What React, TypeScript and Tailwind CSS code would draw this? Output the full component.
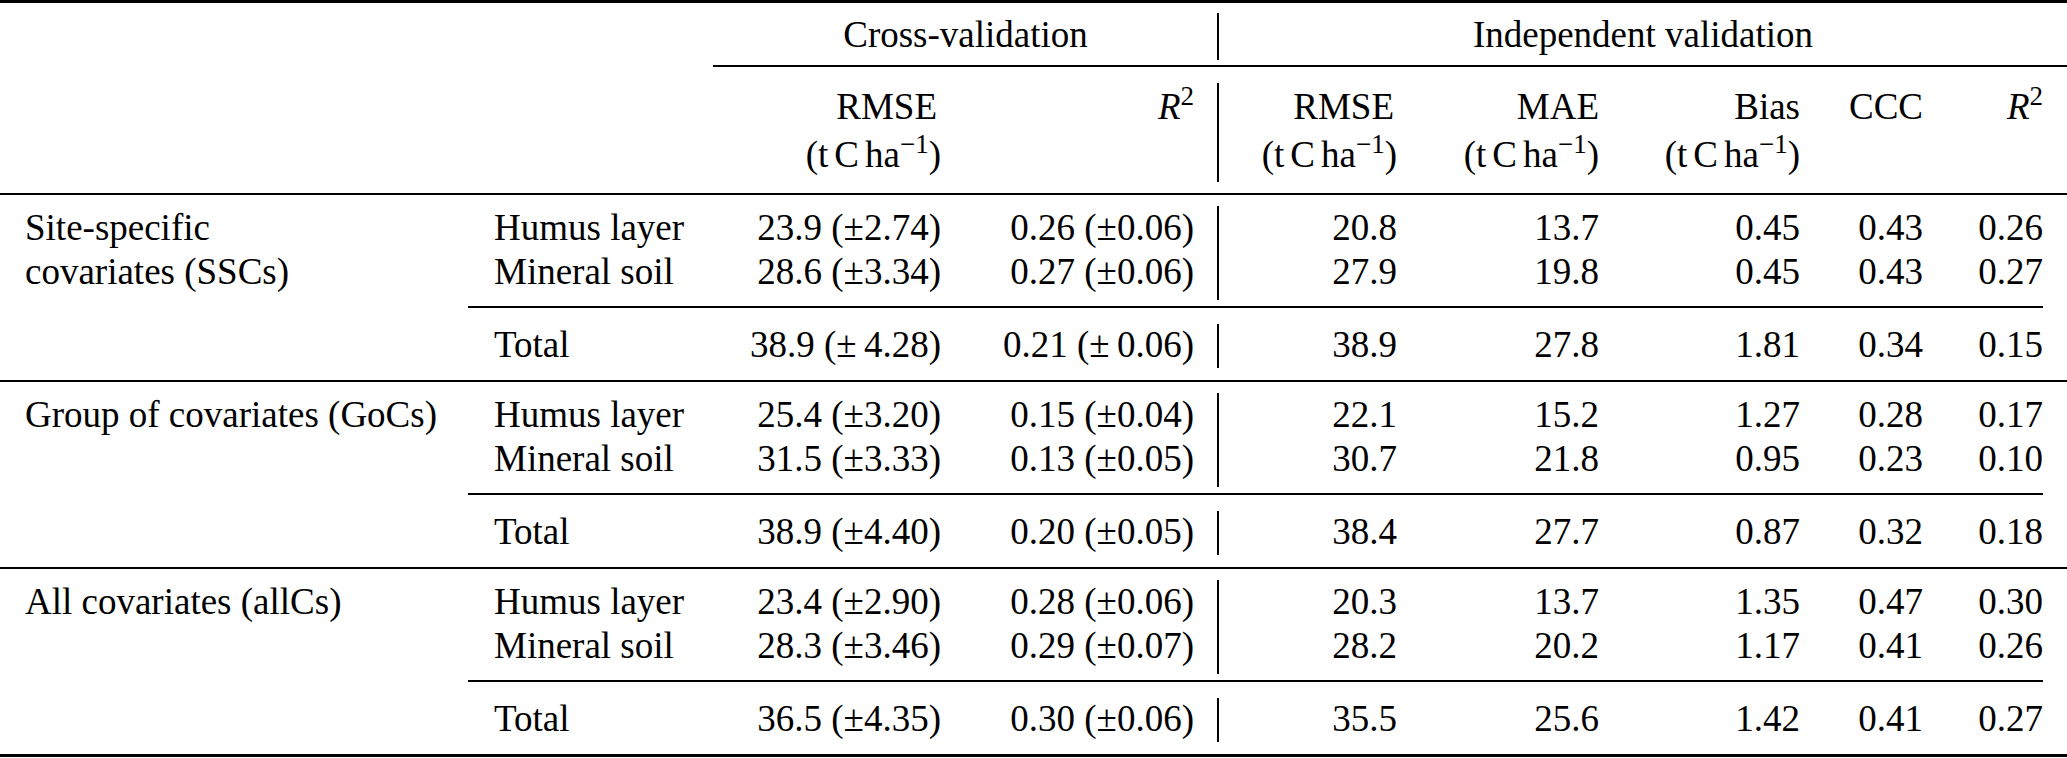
import type { ReactNode } from 'react'

type Group = {
  label: string[]
  rows: string[][]
  total: string[]
}

const groups: Group[] = [
  {
    label: ['Site-specific', 'covariates (SSCs)'],
    rows: [
      ['Humus layer', '23.9 (±2.74)', '0.26 (±0.06)', '20.8', '13.7', '0.45', '0.43', '0.26'],
      ['Mineral soil', '28.6 (±3.34)', '0.27 (±0.06)', '27.9', '19.8', '0.45', '0.43', '0.27'],
    ],
    total: ['Total', '38.9 (±\u20094.28)', '0.21 (±\u20090.06)', '38.9', '27.8', '1.81', '0.34', '0.15'],
  },
  {
    label: ['Group of covariates (GoCs)'],
    rows: [
      ['Humus layer', '25.4 (±3.20)', '0.15 (±0.04)', '22.1', '15.2', '1.27', '0.28', '0.17'],
      ['Mineral soil', '31.5 (±3.33)', '0.13 (±0.05)', '30.7', '21.8', '0.95', '0.23', '0.10'],
    ],
    total: ['Total', '38.9 (±4.40)', '0.20 (±0.05)', '38.4', '27.7', '0.87', '0.32', '0.18'],
  },
  {
    label: ['All covariates (allCs)'],
    rows: [
      ['Humus layer', '23.4 (±2.90)', '0.28 (±0.06)', '20.3', '13.7', '1.35', '0.47', '0.30'],
      ['Mineral soil', '28.3 (±3.46)', '0.29 (±0.07)', '28.2', '20.2', '1.17', '0.41', '0.26'],
    ],
    total: ['Total', '36.5 (±4.35)', '0.30 (±0.06)', '35.5', '25.6', '1.42', '0.41', '0.27'],
  },
]

// column widths for B..I (the part right of the group label)
const colClass = [
  'w-[246px] pl-[26px] text-left',
  'w-[227px] text-right',
  'w-[253px] text-right',
  'w-[178px] text-right',
  'w-[202px] text-right',
  'w-[201px] text-right',
  'w-[123px] text-right',
  'w-[120px] text-right',
]

function Unit() {
  return (
    <span className="whitespace-nowrap">
      (t<span className="ml-[6px]">C</span>
      <span className="ml-[6px]">ha</span>
      <span className="relative -top-[14px] text-[27px] leading-none">−1</span>)
    </span>
  )
}

function R2() {
  return (
    <span>
      <span className="italic">R</span>
      <span className="relative -top-[14px] text-[27px] leading-none">2</span>
    </span>
  )
}

function VLine({ top, bottom }: { top: string; bottom: string }) {
  return (
    <div className="flex w-[25px] justify-end">
      <div className={`w-[2px] bg-black ${top} ${bottom}`} />
    </div>
  )
}

// cells: one entry per column B..I, each a list of lines
function Section({
  cells,
  className,
  vTop,
  vBottom,
}: {
  cells: ReactNode[][]
  className: string
  vTop: string
  vBottom: string
}) {
  return (
    <div className={`flex ${className}`}>
      {cells.map((lines, i) => (
        <div key={i} className="flex">
          {i === 3 && <VLine top={vTop} bottom={vBottom} />}
          <div className={`flex flex-col ${colClass[i]}`}>
            {lines.map((line, j) => (
              <div key={j} className="h-[44px] whitespace-nowrap leading-[44px]">
                {line}
              </div>
            ))}
          </div>
        </div>
      ))}
    </div>
  )
}

export default function App() {
  return (
    <div className="w-[2067px] bg-white font-['Liberation_Serif','Times_New_Roman',serif] text-[37px] text-black">
      <div className="h-[3px] bg-black" />

      {/* group header */}
      <div className="flex h-[62px]">
        <div className="w-[714px]" />
        <div className="flex w-[503px] items-center justify-center pt-[2px]">Cross-validation</div>
        <div className="flex w-[2px] flex-col">
          <div className="mt-[10px] mb-[5px] flex-1 bg-black" />
        </div>
        <div className="flex flex-1 items-center justify-center pt-[2px]">Independent validation</div>
      </div>
      <div className="ml-[713px] h-[2px] bg-black" />

      {/* column header */}
      <div className="flex h-[126px]">
        <div className="w-[468px]" />
        <div className="flex">
          <div className={colClass[0]} />
          <div className={`${colClass[1]} pt-[18px] leading-[44px]`}>
            <div className="pr-[4px]">RMSE</div>
            <div className="mt-[4px]"><Unit /></div>
          </div>
          <div className={`${colClass[2]} pt-[18px] leading-[44px]`}>
            <R2 />
          </div>
          <div className="flex w-[25px] justify-end">
            <div className="mt-[16px] mb-[11px] w-[2px] bg-black" />
          </div>
          <div className={`${colClass[3]} pt-[18px] leading-[44px]`}>
            <div className="pr-[3px]">RMSE</div>
            <div className="mt-[4px]"><Unit /></div>
          </div>
          <div className={`${colClass[4]} pt-[18px] leading-[44px]`}>
            <div>MAE</div>
            <div className="mt-[4px]"><Unit /></div>
          </div>
          <div className={`${colClass[5]} pt-[18px] leading-[44px]`}>
            <div>Bias</div>
            <div className="mt-[4px]"><Unit /></div>
          </div>
          <div className={`${colClass[6]} pt-[18px] leading-[44px]`}>CCC</div>
          <div className={`${colClass[7]} pt-[18px] leading-[44px]`}>
            <R2 />
          </div>
        </div>
      </div>
      <div className="h-[2px] bg-black" />

      {groups.map((g, gi) => (
        <div key={gi}>
          <div className="flex">
            <div className="w-[468px] pt-[11px] pl-[25px]">
              {g.label.map((l) => (
                <div key={l} className="h-[44px] whitespace-nowrap leading-[44px]">
                  {l}
                </div>
              ))}
            </div>
            <div className="flex flex-col">
              <Section
                className="h-[111px] items-stretch pt-[11px]"
                cells={g.rows[0].map((_, ci) => g.rows.map((r) => r[ci]))}
                vTop="mt-0"
                vBottom="mb-[6px]"
              />
              <div className="h-[2px] bg-black" />
              <Section
                className="h-[72px] items-stretch pt-[15px]"
                cells={g.total.map((c) => [c])}
                vTop="mt-[1px]"
                vBottom="mb-[12px]"
              />
            </div>
          </div>
          <div className={gi === groups.length - 1 ? 'h-[3px] bg-black' : 'h-[2px] bg-black'} />
        </div>
      ))}
    </div>
  )
}
